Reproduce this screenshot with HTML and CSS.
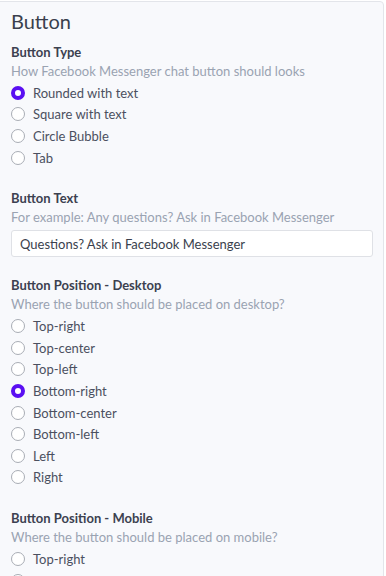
FILE: index.html
```html
<!DOCTYPE html>
<html lang="en">
<head>
    <meta charset="UTF-8">
    <meta name="viewport" content="width=device-width, initial-scale=1.0">
    <title>Button Settings</title>
    <link rel="stylesheet" href="styles.css">
</head>
<body>
    <div class="card">
        <h2 class="card-title">Button</h2>

        <div class="field">
            <div class="field-label">Button Type</div>
            <div class="field-help">How Facebook Messenger chat button should looks</div>
            <label class="radio"><input type="radio" name="type" checked><span class="dot"></span>Rounded with text</label>
            <label class="radio"><input type="radio" name="type"><span class="dot"></span>Square with text</label>
            <label class="radio"><input type="radio" name="type"><span class="dot"></span>Circle Bubble</label>
            <label class="radio"><input type="radio" name="type"><span class="dot"></span>Tab</label>
        </div>

        <div class="field field-text">
            <div class="field-label">Button Text</div>
            <div class="field-help">For example: Any questions? Ask in Facebook Messenger</div>
            <input class="text-input" type="text" value="Questions? Ask in Facebook Messenger">
        </div>

        <div class="field">
            <div class="field-label">Button Position - Desktop</div>
            <div class="field-help">Where the button should be placed on desktop?</div>
            <label class="radio"><input type="radio" name="desktop"><span class="dot"></span>Top-right</label>
            <label class="radio"><input type="radio" name="desktop"><span class="dot"></span>Top-center</label>
            <label class="radio"><input type="radio" name="desktop"><span class="dot"></span>Top-left</label>
            <label class="radio"><input type="radio" name="desktop" checked><span class="dot"></span>Bottom-right</label>
            <label class="radio"><input type="radio" name="desktop"><span class="dot"></span>Bottom-center</label>
            <label class="radio"><input type="radio" name="desktop"><span class="dot"></span>Bottom-left</label>
            <label class="radio"><input type="radio" name="desktop"><span class="dot"></span>Left</label>
            <label class="radio"><input type="radio" name="desktop"><span class="dot"></span>Right</label>
        </div>

        <div class="field">
            <div class="field-label">Button Position - Mobile</div>
            <div class="field-help">Where the button should be placed on mobile?</div>
            <label class="radio"><input type="radio" name="mobile"><span class="dot"></span>Top-right</label>
            <label class="radio"><input type="radio" name="mobile"><span class="dot"></span>Top-center</label>
            <label class="radio"><input type="radio" name="mobile"><span class="dot"></span>Top-left</label>
        </div>
    </div>
</body>
</html>
```

FILE: styles.css
```css
body {
    font-family: Lato, "Noto Sans", sans-serif;
    margin: 0;
    padding: 0;
    background-color: #ffffff;
    color: #4b5060;
    height: 576px;
    overflow: hidden;
}
.card {
    margin: 1px 2px 0 -10px;
    padding: 6px 10px 20px 20px;
    background-color: #f8f9fc;
    border: 1px solid #e3e5ea;
    border-radius: 4px;
}
.card-title {
    font-size: 20px;
    font-weight: normal;
    color: #3a3f4d;
    margin: 0 0 9px 0;
    line-height: 26px;
}
.field {
    margin-bottom: 21px;
}
.field-text {
    margin-bottom: 19px;
}
.field-label {
    font-size: 13px;
    font-weight: bold;
    color: #3c4150;
    line-height: 18px;
}
.field-help {
    font-size: 13px;
    color: #9aa3b2;
    line-height: 20px;
    margin-bottom: 1px;
}
.radio {
    display: flex;
    align-items: center;
    font-size: 13px;
    line-height: 18px;
    height: 21.6px;
    cursor: pointer;
}
.radio input {
    display: none;
}
.radio .dot {
    width: 14px;
    height: 14px;
    border: 1px solid #a9adb5;
    border-radius: 50%;
    background-color: #ffffff;
    margin-right: 8px;
    box-sizing: border-box;
}
.radio input:checked + .dot {
    border: 4.5px solid #5a0ff2;
}
.text-input {
    display: block;
    width: 100%;
    box-sizing: border-box;
    height: 27px;
    margin-top: 3px;
    padding: 0 8px;
    font-family: inherit;
    font-size: 13px;
    color: #3a3f4d;
    background-color: #ffffff;
    border: 1px solid #dfe1e6;
    border-radius: 3px;
}
```
